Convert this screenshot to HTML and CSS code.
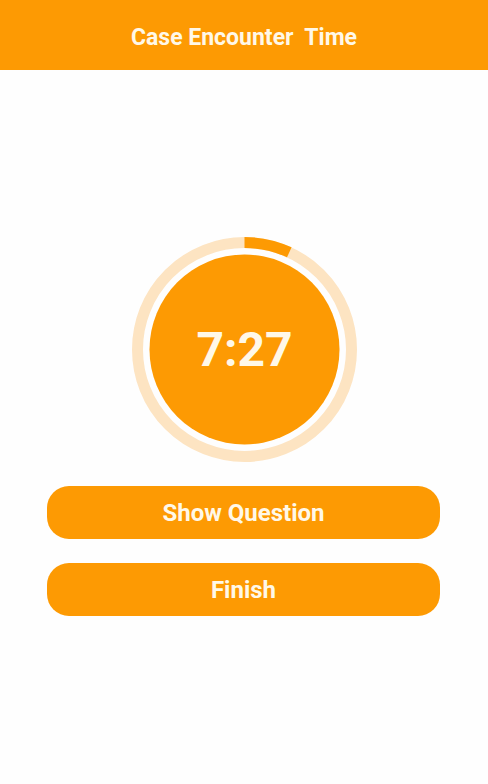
FILE: index.html
```html
<!DOCTYPE html>
<html lang="en">

<head>
    <meta charset="UTF-8">
    <meta name="viewport" content="width=device-width, initial-scale=1.0">
    <title>Case Encounter Time</title>
    <link rel="stylesheet" href="styles.css">
</head>

<body>
    <header class="app-bar">
        <h1>Case Encounter&nbsp; Time</h1>
    </header>

    <main class="timer-page">
        <div class="timer">
            <svg class="timer-ring" width="225" height="225" viewBox="0 0 225 225">
                <circle class="ring-track" cx="112.5" cy="112.5" r="107"></circle>
                <circle class="ring-progress" cx="112.5" cy="112.5" r="107"
                    stroke-dasharray="46.2 700" transform="rotate(-90 112.5 112.5)"></circle>
                <circle class="ring-disk" cx="112.5" cy="112.5" r="95"></circle>
            </svg>
            <span class="timer-text">7:27</span>
        </div>

        <div class="btn-group">
            <button class="btn">Show Question</button>
            <button class="btn">Finish</button>
        </div>
    </main>
</body>

</html>
```

FILE: styles.css
```css
* {
    margin: 0;
    padding: 0;
    box-sizing: border-box;
    font-family: Roboto, 'Liberation Sans', sans-serif;
}

:root {
    --accent: #fd9a03;
    --accent-light: #fde4c2;
    --text-light: #fff8e8;
    --bg: #fefefe;
}

body {
    background-color: var(--bg);
    min-height: 100vh;
}

.app-bar {
    height: 70px;
    background-color: var(--accent);
    display: flex;
    align-items: center;
    justify-content: center;
}

.app-bar h1 {
    color: var(--text-light);
    font-size: 23px;
    font-weight: 700;
    padding-top: 4px;
}

.timer-page {
    display: flex;
    flex-direction: column;
    align-items: center;
    padding-top: 167px;
}

.timer {
    position: relative;
    width: 225px;
    height: 225px;
    margin-left: 1px;
}

.timer-ring {
    display: block;
}

.ring-track {
    fill: none;
    stroke: var(--accent-light);
    stroke-width: 11;
}

.ring-progress {
    fill: none;
    stroke: var(--accent);
    stroke-width: 11;
}

.ring-disk {
    fill: var(--accent);
}

.timer-text {
    position: absolute;
    inset: 0;
    display: flex;
    align-items: center;
    justify-content: center;
    color: var(--text-light);
    font-size: 48px;
    font-weight: 700;
}

.btn-group {
    width: 100%;
    padding: 24px 48px 0 47px;
    display: flex;
    flex-direction: column;
    gap: 24px;
}

.btn {
    height: 53px;
    border: none;
    border-radius: 22px;
    background-color: var(--accent);
    color: var(--text-light);
    font-size: 24px;
    font-weight: 700;
    padding-top: 1px;
    cursor: pointer;
}
```
